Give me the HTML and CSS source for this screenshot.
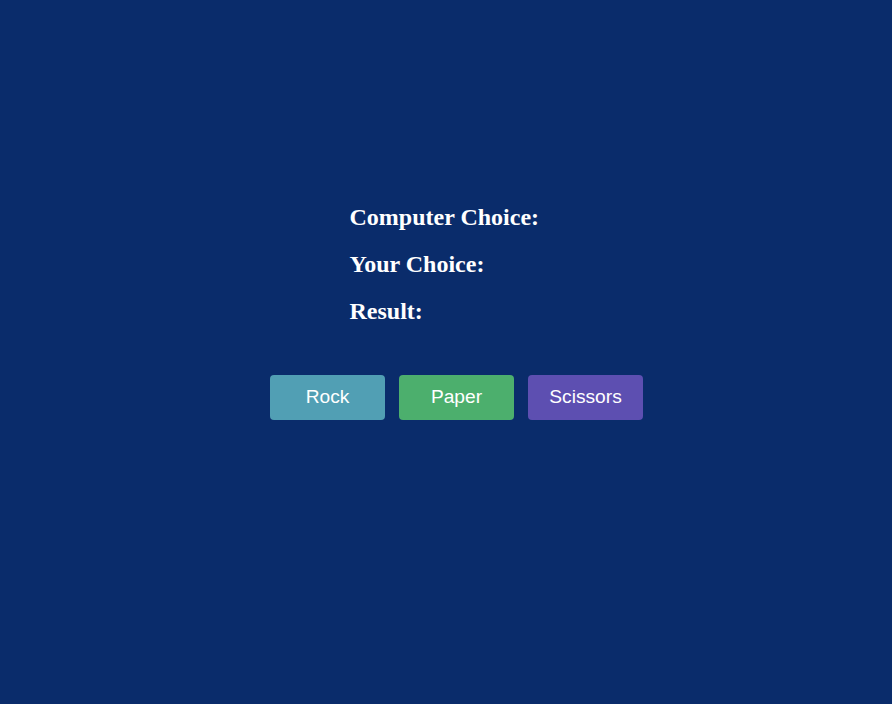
FILE: index.html
```html
<!DOCTYPE html>
<html>
<head>
<meta charset="utf-8">
<link rel="stylesheet" href="styles.css">
</head>
<body>
<div class="game">
  <div class="info">
    <h2 class="line">Computer Choice: <span class="val"></span></h2>
    <h2 class="line">Your Choice: <span class="val"></span></h2>
    <h2 class="line">Result: <span class="val"></span></h2>
  </div>
  <div class="buttons">
    <button class="btn rock">Rock</button>
    <button class="btn paper">Paper</button>
    <button class="btn scissors">Scissors</button>
  </div>
</div>
</body>
</html>
```
FILE: styles.css
```css
html, body {
  margin: 0;
  height: 100%;
}
body {
  background: #0a2c6b;
  color: #ffffff;
  font-family: "Liberation Serif", "Times New Roman", serif;
}
.game {
  padding-top: 184px;
}
.info {
  width: 200px;
  margin: 0 auto;
  padding-left: 7px;
}
.line {
  font-size: 24px;
  font-weight: bold;
  margin: 19.92px 0;
  white-space: nowrap;
}
.buttons {
  display: flex;
  justify-content: center;
  gap: 14px;
  padding-left: 21px;
  margin-top: 50px;
}
.btn {
  width: 115px;
  height: 45px;
  border: none;
  border-radius: 4px;
  color: #ffffff;
  font-family: "Liberation Sans", Arial, sans-serif;
  font-size: 19.2px;
  cursor: pointer;
}
.rock { background: #519fb4; }
.paper { background: #4caf6d; }
.scissors { background: #5d4fb1; }
```
